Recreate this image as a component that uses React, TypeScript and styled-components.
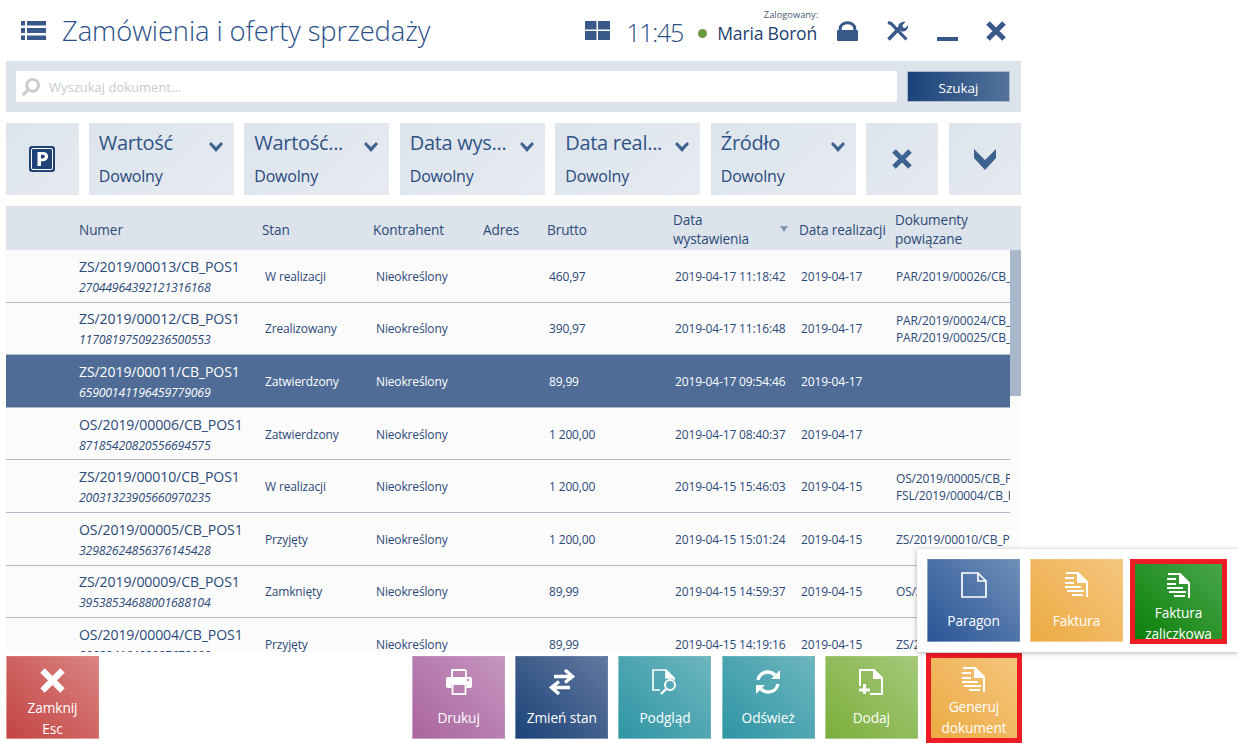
import React from "react";
import styled, { createGlobalStyle } from "styled-components";
import { FaSearch } from "react-icons/fa";

const GlobalStyle = createGlobalStyle`
  html, body {
    margin: 0;
    padding: 0;
    background: #fff;
    font-family: "Open Sans", "Noto Sans", sans-serif;
  }
`;

const Page = styled.div`
  position: relative;
  width: 1238px;
  height: 748px;
  overflow: hidden;
`;

const Main = styled.div`
  width: 1015px;
  margin-left: 6px;
  display: flex;
  flex-direction: column;
`;

const Header = styled.header`
  height: 61px;
  display: flex;
  align-items: center;
  color: #365a8c;
`;

const MenuIcon = styled.div`
  display: flex;
  margin-left: 15px;
  width: 41px;
`;

const Title = styled.h1`
  margin: 0;
  font-size: 27.4px;
  font-weight: 300;
  color: #2a5088;
  flex: 1;
  letter-spacing: -0.1px;
`;

const Clock = styled.span`
  font-size: 25px;
  font-weight: 300;
  color: #2a5088;
  margin: 2px 15px 0 16px;
  letter-spacing: -1.2px;
`;

const Dot = styled.span`
  width: 9px;
  height: 9px;
  border-radius: 50%;
  background: #6c9a3d;
  margin: 5px 10px 0 0;
`;

const UserBlock = styled.div`
  position: relative;
  padding-top: 4px;
  font-size: 17.6px;
  color: #1f3f70;
  letter-spacing: -0.2px;
`;

const UserCaption = styled.span`
  position: absolute;
  right: -1px;
  top: -9px;
  font-size: 9.3px;
  color: #4a5a70;
  white-space: nowrap;
  letter-spacing: 0;
`;

const HeaderIcons = styled.div`
  display: flex;
  align-items: center;
  gap: 28.3px;
  margin: 1px 15px 0 20px;
`;

const SearchBar = styled.div`
  height: 51px;
  background: #dce3ea;
  padding: 10px 11px 10px 10px;
  box-sizing: border-box;
  display: flex;
  gap: 10px;
`;

const SearchField = styled.div`
  flex: 1;
  background: #fff;
  display: flex;
  align-items: center;
  padding: 1px 0 0 6px;
  gap: 9px;
  color: #c8cbcf;
  font-size: 13px;
`;

const SearchGlyph = styled(FaSearch)`
  transform: scaleX(-1);
  margin-top: -1px;
`;

const SearchButton = styled.button`
  width: 103px;
  padding: 2px 0 0;
  border: 1px solid #a9b9cf;
  background: linear-gradient(90deg, #1b4379, #53739b);
  color: #fff;
  font: inherit;
  font-size: 13.5px;
`;

const FilterRow = styled.div`
  margin-top: 11px;
  height: 72px;
  display: grid;
  grid-template-columns: 72.5px repeat(5, 145.2px) 72px 72.4px;
  column-gap: 10.3px;
`;

const FilterSquare = styled.div`
  background: linear-gradient(135deg, #dde4ec, #e6eaf0);
  display: flex;
  align-items: center;
  justify-content: center;
`;

const FilterBox = styled.div`
  background: linear-gradient(135deg, #dde4ec, #e7ebf1);
  padding: 6px 10px 0;
  position: relative;
  color: #2f5486;
`;

const FilterName = styled.div`
  font-size: 20px;
  line-height: 27px;
  letter-spacing: -0.3px;
  white-space: nowrap;
`;

const FilterValue = styled.div`
  font-size: 16px;
  line-height: 21px;
  margin-top: 10px;
  color: #27497c;
  letter-spacing: -0.2px;
`;

const FilterChevron = styled.div`
  position: absolute;
  display: flex;
  right: 11px;
  top: 19px;
`;

const TableHead = styled.div`
  margin-top: 11px;
  height: 44px;
  box-sizing: border-box;
  padding-top: 2px;
  background: #dce3ea;
`;

const columns = "73px 183px 111px 110px 64px 126px 126px 96px 115px";

const HeadGrid = styled.div`
  display: grid;
  grid-template-columns: ${columns};
  height: 100%;
  align-items: center;
  font-size: 13.6px;
  line-height: 19px;
  color: #2c4a78;
  letter-spacing: -0.1px;
`;

const HeadSort = styled.div`
  display: flex;
  align-items: center;
  justify-content: space-between;
  padding-right: 11px;
`;

const SortMark = styled.span`
  width: 0;
  height: 0;
  border-left: 4px solid transparent;
  border-right: 4px solid transparent;
  border-top: 6px solid #8297b4;
`;

const HeadLabel = styled.span`
  white-space: nowrap;
`;

const TableBody = styled.div`
  position: relative;
  height: 402px;
  overflow: hidden;
  background: #fbfbfb;
`;

const Row = styled.div<{ $selected?: boolean }>`
  display: grid;
  grid-template-columns: ${columns};
  height: 52.6px;
  box-sizing: border-box;
  padding-top: 1px;
  border-bottom: 1px solid #aebaca;
  align-items: center;
  width: 1004px;
  overflow: hidden;
  font-size: 12px;
  letter-spacing: -0.15px;
  color: ${(p) => (p.$selected ? "#fff" : "#2c4a78")};
  background: ${(p) => (p.$selected ? "#4e6c96" : "transparent")};
`;

const NumberCell = styled.div`
  padding-top: 2px;
  font-size: 14.1px;
  line-height: 20px;
  letter-spacing: -0.12px;
  white-space: nowrap;
`;

const Serial = styled.div`
  margin-top: 1px;
  font-size: 12.3px;
  line-height: 20px;
  font-style: italic;
  letter-spacing: -0.2px;
`;

const Cell = styled.div<{ $tight?: boolean }>`
  padding-left: ${(p) => (p.$tight ? "2px" : "3px")};
  white-space: nowrap;
  overflow: hidden;
`;

const DocsCell = styled(Cell)`
  padding-left: 1px;
  font-size: 12px;
  line-height: 17px;
`;

const ScrollThumb = styled.div`
  position: absolute;
  right: 0;
  top: 0;
  width: 11px;
  height: 146px;
  background: #a9b7cb;
`;

const BottomBar = styled.div`
  margin-top: 4px;
  display: flex;
  gap: 10.2px;
  height: 83px;
`;

const Spacer = styled.div`
  flex: 1;
`;

type Tone = "red" | "purple" | "navy" | "teal" | "green" | "orange" | "blue" | "lime";

const tones: Record<Tone, string> = {
  red: "linear-gradient(45deg, #c44543, #d98481)",
  purple: "linear-gradient(45deg, #a9659f, #c595c0)",
  navy: "linear-gradient(45deg, #1c4378, #61799f)",
  teal: "linear-gradient(45deg, #2f95a4, #6db6bf)",
  lime: "linear-gradient(45deg, #7cae3c, #a4c97a)",
  orange: "linear-gradient(45deg, #ecaa41, #f4c67f)",
  blue: "linear-gradient(45deg, #2a5596, #6f8fb8)",
  green: "linear-gradient(45deg, #0b7f09, #4aa64c)",
};

const Tile = styled.div<{ $tone: Tone; $marked?: boolean }>`
  position: relative;
  width: 93px;
  height: 83px;
  flex: none;
  box-sizing: border-box;
  background: ${(p) => tones[p.$tone]};
  color: #fff;
  display: flex;
  flex-direction: column;
  align-items: center;
  text-align: center;
  font-size: 13.7px;
  line-height: 20.5px;
  letter-spacing: -0.1px;
  border: 1px solid rgba(255, 255, 255, 0.25);
  outline: ${(p) => (p.$marked ? "5px solid #ed1c24" : "none")};
  outline-offset: ${(p) => (p.$marked ? "-3px" : "0")};
`;

const TileIcon = styled.div<{ $tall?: boolean }>`
  flex: none;
  height: ${(p) => (p.$tall ? "30px" : "39px")};
  margin-top: ${(p) => (p.$tall ? "11px" : "12px")};
  display: flex;
  align-items: flex-start;
  justify-content: center;
`;

const Popup = styled.div`
  position: absolute;
  left: 917px;
  top: 549px;
  width: 321px;
  height: 103px;
  background: #fff;
  box-shadow: 0 1px 5px rgba(0, 0, 0, 0.3);
  display: flex;
  padding: 10px 0 0 10px;
  box-sizing: border-box;
  gap: 10px;
`;

const GenerateTile = styled(Tile)`
  width: 92px;
  height: 86px;
  margin: -1px 1px 0 0;
`;

const MarkedPopupTile = styled(Tile)`
  height: 81px;
  margin: 2px 0 0 -1px;
`;

const DocIcon = () => (
  <svg width="26" height="26" viewBox="0 0 26 26" fill="none" stroke="#fff" strokeWidth="2">
    <path d="M2 1h12l9 9v15" />
    <path d="M14 1v9h9" fill="#fff" />
    <path d="M1 6h9M1 11h9M1 15h16M3 19h17M8 23h11" />
  </svg>
);

const BlankDocIcon = () => (
  <svg width="26" height="26" viewBox="0 0 26 26" fill="none" stroke="#fff" strokeWidth="1.7">
    <path d="M1 1h16l8 8v16H1z" />
    <path d="M17 1v8h8" />
  </svg>
);

const PrintIcon = () => (
  <svg width="26" height="26" viewBox="0 0 26 26" fill="none" stroke="#fff" strokeWidth="1.8">
    <path d="M6 8V1h13l1 1v6" />
    <path d="M5.5 19H2a2 2 0 0 1-2-2V10a2 2 0 0 1 2-2h22a2 2 0 0 1 2 2v7a2 2 0 0 1-2 2h-3.500v-4h-15z" fill="#fff" stroke="none" />
    <rect x="6.500" y="15" width="13" height="10" />
    <circle cx="22" cy="11" r="1.300" fill="#c595c0" stroke="none" />
  </svg>
);

const PreviewIcon = () => (
  <svg width="26" height="26" viewBox="0 0 26 26" fill="none" stroke="#fff" strokeWidth="1.6">
    <path d="M8 21H1V1h13l8 8v2" />
    <path d="M14 1v8h8" fill="#fff" />
    <circle cx="18" cy="16" r="5" strokeWidth="2" />
    <path d="M14 20l-5 5" strokeWidth="2.4" />
  </svg>
);

const AddIcon = () => (
  <svg width="26" height="26" viewBox="0 0 26 26" fill="none" stroke="#fff" strokeWidth="2">
    <path d="M2 17V1h14l8 8v16H12" />
    <path d="M16 1v8h8" fill="#fff" />
    <path d="M1 21h11M6.500 15v10" strokeWidth="3" />
  </svg>
);

const SwapIcon = () => (
  <svg width="26" height="26" viewBox="0 0 26 26" fill="none" stroke="#fff" strokeWidth="3.400">
    <path d="M5 7.500h18M16 1l7.500 6.500L16 13.500" />
    <path d="M21 18.500H3M10 12.500l-7.500 6L10 25" />
  </svg>
);

const RefreshIcon = () => (
  <svg width="26" height="26" viewBox="0 0 26 26" fill="none" stroke="#fff" strokeWidth="3.400">
    <path d="M3 11C4 6 8 3 13 3c3 0 5 1 7 3" />
    <path d="M25 1v9h-9z" fill="#fff" stroke="none" />
    <path d="M23 15c-1 5-5 8-10 8-3 0-5-1-7-3" />
    <path d="M1 25v-9h9z" fill="#fff" stroke="none" />
  </svg>
);

const ListIcon = () => (
  <svg width="25" height="19" viewBox="0 0 25 19" fill="#38598a">
    <rect x="0" y="0" width="4" height="4.500" />
    <rect x="6" y="0" width="19" height="4.500" />
    <rect x="0" y="7" width="4" height="5" />
    <rect x="6" y="7" width="19" height="5" />
    <rect x="0" y="14.500" width="4" height="4.500" />
    <rect x="6" y="14.500" width="19" height="4.500" />
  </svg>
);

const GridIcon = () => (
  <svg width="25" height="19" viewBox="0 0 25 19" fill="#38598a">
    <rect x="0" y="0" width="11.500" height="8.500" />
    <rect x="13" y="0" width="12" height="8.500" />
    <rect x="0" y="10" width="11.500" height="9" />
    <rect x="13" y="10" width="12" height="9" />
  </svg>
);

const LockIcon = () => (
  <svg width="21" height="20" viewBox="0 0 21 20" fill="#38598a">
    <path d="M3.200 10V7.500a7.300 5.800 0 0 1 14.600 0V10" fill="none" stroke="#38598a" strokeWidth="3" />
    <rect x="0" y="9" width="21" height="11" rx="1" />
  </svg>
);

const ToolsIcon = () => (
  <svg width="22" height="20" viewBox="0 0 22 20" fill="none" stroke="#38598a">
    <path d="M2 1.500l3 1 15.500 16" strokeWidth="3.200" />
    <path d="M2.500 18.500L13.500 7" strokeWidth="3.600" />
    <path d="M12.500 8c-1.500-4 2.500-8 7-7l-3 3 .5 2.500 2.500.5 2.500-3c1 4-3.500 8-7 6z" fill="#38598a" stroke="none" />
  </svg>
);

const CloseIcon = ({ size, color = "#38598a" }: { size: number; color?: string }) => (
  <svg width={size} height={size} viewBox="0 0 20 20" fill="none" stroke={color} strokeWidth="5">
    <path d="M2 2l16 16M18 2L2 18" />
  </svg>
);

const Minimize = styled.span`
  width: 21px;
  height: 4px;
  background: #38598a;
  margin-top: 16px;
`;

const ParkBadge = () => (
  <svg width="26" height="26" viewBox="0 0 26 26">
    <rect x="0" y="0" width="26" height="26" rx="3" fill="#1f4379" />
    <rect x="2.500" y="2.500" width="21" height="21" rx="1.500" fill="none" stroke="#fff" strokeWidth="1" />
    <path d="M8.500 20V6h6a4.600 4.600 0 0 1 0 9.200H12V20zM12 8.800v3.600h2a1.800 1.800 0 0 0 0-3.600z" fill="#fff" fillRule="evenodd" />
  </svg>
);

const Chevron = () => (
  <svg width="14" height="11" viewBox="0 0 14 11" fill="#3e6290">
    <path d="M0 2l2-2 5 5 5-5 2 2-7 8z" />
  </svg>
);

const BigChevron = () => (
  <svg width="22" height="21" viewBox="0 0 22 21" fill="#3e6290">
    <path d="M0 0l11 11L22 0v9L11 21 0 9z" />
  </svg>
);

const filters = ["Wartość", "Wartość...", "Data wys...", "Data real...", "Źródło"];

type Doc = {
  number: string;
  serial: string;
  state: string;
  gross: string;
  issued: string;
  realized: string;
  docs: string[];
  selected?: boolean;
};

const rows: Doc[] = [
  { number: "ZS/2019/00013/CB_POS1", serial: "27044964392121316168", state: "W realizacji", gross: "460,97", issued: "2019-04-17 11:18:42", realized: "2019-04-17", docs: ["PAR/2019/00026/CB_POS1"] },
  { number: "ZS/2019/00012/CB_POS1", serial: "11708197509236500553", state: "Zrealizowany", gross: "390,97", issued: "2019-04-17 11:16:48", realized: "2019-04-17", docs: ["PAR/2019/00024/CB_POS1", "PAR/2019/00025/CB_POS1"] },
  { number: "ZS/2019/00011/CB_POS1", serial: "65900141196459779069", state: "Zatwierdzony", gross: "89,99", issued: "2019-04-17 09:54:46", realized: "2019-04-17", docs: [], selected: true },
  { number: "OS/2019/00006/CB_POS1", serial: "87185420820556694575", state: "Zatwierdzony", gross: "1 200,00", issued: "2019-04-17 08:40:37", realized: "2019-04-17", docs: [] },
  { number: "ZS/2019/00010/CB_POS1", serial: "20031323905660970235", state: "W realizacji", gross: "1 200,00", issued: "2019-04-15 15:46:03", realized: "2019-04-15", docs: ["OS/2019/00005/CB_POS1", "FSL/2019/00004/CB_POS1"] },
  { number: "OS/2019/00005/CB_POS1", serial: "32982624856376145428", state: "Przyjęty", gross: "1 200,00", issued: "2019-04-15 15:01:24", realized: "2019-04-15", docs: ["ZS/2019/00010/CB_POS1"] },
  { number: "ZS/2019/00009/CB_POS1", serial: "39538534688001688104", state: "Zamknięty", gross: "89,99", issued: "2019-04-15 14:59:37", realized: "2019-04-15", docs: ["OS/2019/00004/CB_POS1"] },
  { number: "OS/2019/00004/CB_POS1", serial: "20032416482087672000", state: "Przyjęty", gross: "89,99", issued: "2019-04-15 14:19:16", realized: "2019-04-15", docs: ["ZS/2019/00009/CB_POS1"] },
];

export default function App() {
  return (
    <Page>
      <GlobalStyle />
      <Main>
        <Header>
          <MenuIcon>
            <ListIcon />
          </MenuIcon>
          <Title>Zamówienia i oferty sprzedaży</Title>
          <GridIcon />
          <Clock>11:45</Clock>
          <Dot />
          <UserBlock>
            <UserCaption>Zalogowany:</UserCaption>
            Maria Boroń
          </UserBlock>
          <HeaderIcons>
            <LockIcon />
            <ToolsIcon />
            <Minimize />
            <CloseIcon size={20} />
          </HeaderIcons>
        </Header>

        <SearchBar>
          <SearchField>
            <SearchGlyph size={18} />
            Wyszukaj dokument...
          </SearchField>
          <SearchButton>Szukaj</SearchButton>
        </SearchBar>

        <FilterRow>
          <FilterSquare>
            <ParkBadge />
          </FilterSquare>
          {filters.map((name) => (
            <FilterBox key={name}>
              <FilterName>{name}</FilterName>
              <FilterValue>Dowolny</FilterValue>
              <FilterChevron>
                <Chevron />
              </FilterChevron>
            </FilterBox>
          ))}
          <FilterSquare>
            <CloseIcon size={20} color="#3e6290" />
          </FilterSquare>
          <FilterSquare>
            <BigChevron />
          </FilterSquare>
        </FilterRow>

        <TableHead>
          <HeadGrid>
            <span />
            <span>Numer</span>
            <span>Stan</span>
            <span>Kontrahent</span>
            <span>Adres</span>
            <span>Brutto</span>
            <HeadSort>
              <span>
                Data
                <br />
                wystawienia
              </span>
              <SortMark />
            </HeadSort>
            <HeadLabel>Data realizacji</HeadLabel>
            <span>
              Dokumenty
              <br />
              powiązane
            </span>
          </HeadGrid>
        </TableHead>

        <TableBody>
          {rows.map((r) => (
            <Row key={r.number} $selected={r.selected}>
              <span />
              <NumberCell>
                {r.number}
                <Serial>{r.serial}</Serial>
              </NumberCell>
              <Cell>{r.state}</Cell>
              <Cell>Nieokreślony</Cell>
              <Cell />
              <Cell $tight>{r.gross}</Cell>
              <Cell $tight>{r.issued}</Cell>
              <Cell $tight>{r.realized}</Cell>
              <DocsCell>
                {r.docs.map((d) => (
                  <div key={d}>{d}</div>
                ))}
              </DocsCell>
            </Row>
          ))}
          <ScrollThumb />
        </TableBody>

        <BottomBar>
          <Tile $tone="red">
            <TileIcon $tall>
              <CloseIcon size={25} color="#fff" />
            </TileIcon>
            <div>
              Zamknij
              <br />
              Esc
            </div>
          </Tile>
          <Spacer />
          <Tile $tone="purple">
            <TileIcon><PrintIcon /></TileIcon>
            <div>Drukuj</div>
          </Tile>
          <Tile $tone="navy">
            <TileIcon><SwapIcon /></TileIcon>
            <div>Zmień stan</div>
          </Tile>
          <Tile $tone="teal">
            <TileIcon><PreviewIcon /></TileIcon>
            <div>Podgląd</div>
          </Tile>
          <Tile $tone="teal">
            <TileIcon><RefreshIcon /></TileIcon>
            <div>Odśwież</div>
          </Tile>
          <Tile $tone="lime">
            <TileIcon><AddIcon /></TileIcon>
            <div>Dodaj</div>
          </Tile>
          <GenerateTile $tone="orange" $marked>
            <TileIcon $tall><DocIcon /></TileIcon>
            <div>
              Generuj
              <br />
              dokument
            </div>
          </GenerateTile>
        </BottomBar>
      </Main>

      <Popup>
        <Tile $tone="blue">
          <TileIcon><BlankDocIcon /></TileIcon>
          <div>Paragon</div>
        </Tile>
        <Tile $tone="orange">
          <TileIcon><DocIcon /></TileIcon>
          <div>Faktura</div>
        </Tile>
        <MarkedPopupTile $tone="green" $marked>
          <TileIcon $tall><DocIcon /></TileIcon>
          <div>
            Faktura
            <br />
            zaliczkowa
          </div>
        </MarkedPopupTile>
      </Popup>
    </Page>
  );
}
